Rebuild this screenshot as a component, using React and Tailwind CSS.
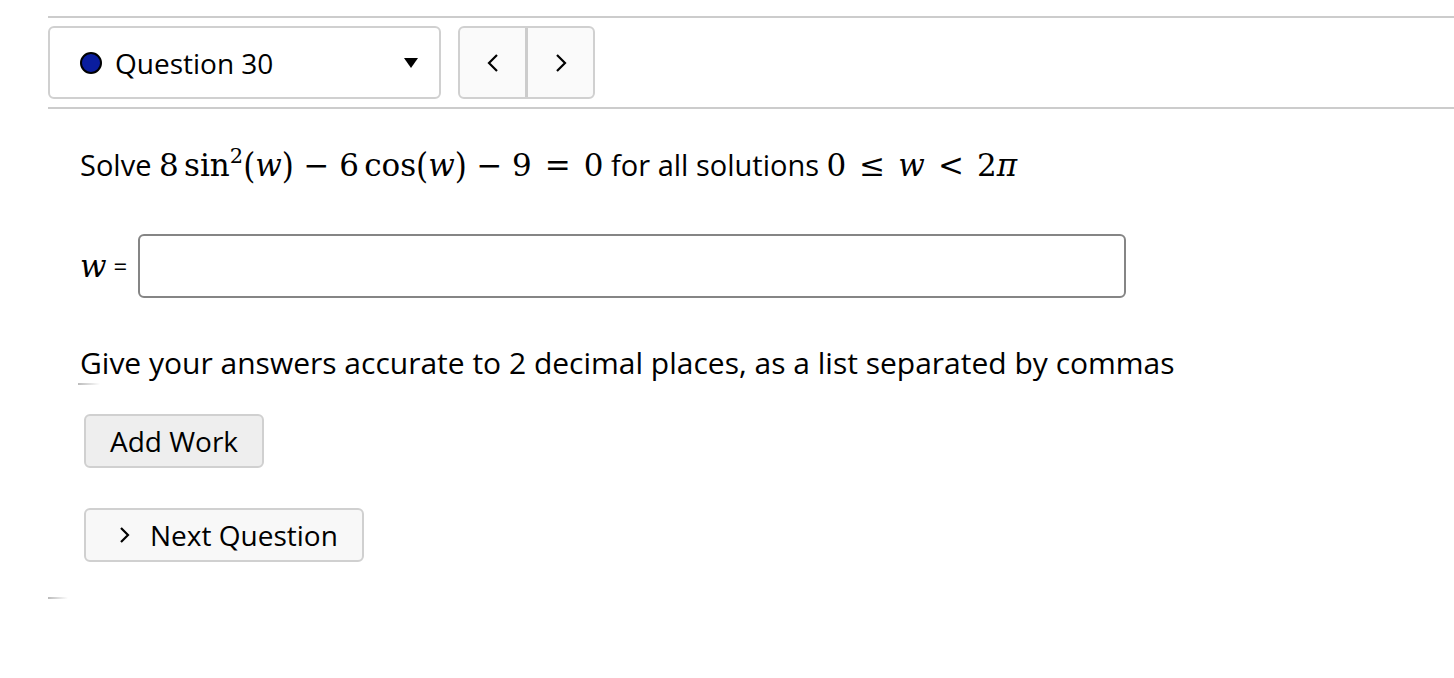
import { useState } from 'react';

const sans = { fontFamily: '"Open Sans", "Noto Sans", sans-serif' };

const M = ({ children, className = '' }) => (
  <span className={`font-['DejaVu_Serif',serif] text-[31px] ${className}`}>{children}</span>
);

const V = ({ children }) => <span className="italic">{children}</span>;
const Op = ({ children }) => <span className="mx-[0.31em]">{children}</span>;
const Rel = ({ children }) => <span className="mx-[0.42em]">{children}</span>;
const Paren = ({ children }) => <span className="inline-block scale-y-[1.15]">{children}</span>;

const Question = () => {
  const [answer, setAnswer] = useState('');

  return (
    <div className="bg-white min-h-[678px] text-black" style={sans}>
      <div className="pt-4 pl-12">
        <div className="h-[2px] bg-[#cccccc]" />

        <div className="flex items-center gap-[17px] py-[8px]">
          <div className="w-[393px] h-[73px] border-2 border-[#d0d0d0] rounded-[6px] flex items-center pl-[30px] pr-5">
            <span className="w-[22px] h-[22px] rounded-full bg-[#0a1d9e] border-[2.5px] border-black" />
            <span className="ml-[13px] text-[28px]">Question 30</span>
            <span className="ml-auto">
              <svg width="16" height="12" viewBox="0 0 16 12">
                <path d="M1 1 L15 1 L8 11 Z" fill="#000" />
              </svg>
            </span>
          </div>

          <div className="flex h-[73px] border-2 border-[#d0d0d0] rounded-[6px] bg-[#fafafa] overflow-hidden">
            <button className="w-[65px] flex items-center justify-center">
              <svg width="12" height="20" viewBox="0 0 12 20">
                <path d="M10 2 L2 10 L10 18" fill="none" stroke="#000" strokeWidth="2.2" />
              </svg>
            </button>
            <div className="w-[3px] bg-[#cccccc]" />
            <button className="w-[65px] flex items-center justify-center">
              <svg width="12" height="20" viewBox="0 0 12 20">
                <path d="M2 2 L10 10 L2 18" fill="none" stroke="#000" strokeWidth="2.2" />
              </svg>
            </button>
          </div>
        </div>

        <div className="h-[2px] bg-[#cccccc]" />

        <div className="pl-8 pt-[36px]">
          <p className="text-[29px] leading-[40px]">
            Solve{' '}
            <M>
              8<span className="ml-[0.17em]">sin</span>
              <sup className="text-[21px] -top-[13px]">2</sup>
              <Paren>(</Paren><V>w</V><Paren>)</Paren>
              <Op>−</Op>6<span className="ml-[0.17em]">cos</span>
              <Paren>(</Paren><V>w</V><Paren>)</Paren>
              <Op>−</Op>9<Rel>=</Rel>0
            </M>{' '}
            for all solutions{' '}
            <M>
              0<Rel>≤</Rel><V>w</V><Rel>&lt;</Rel>2<V>π</V>
            </M>
          </p>

          <div className="flex items-center mt-[49px]">
            <M className="italic text-[31px]">w</M>
            <span className="text-[24px] ml-[7px] mr-[11px]">=</span>
            <input
              value={answer}
              onChange={(e) => setAnswer(e.target.value)}
              className="w-[988px] h-[64px] border-2 border-[#858585] rounded-[6px] outline-none px-3 text-[24px]"
            />
          </div>

          <p className="mt-[45px] text-[30px] leading-[40px]">
            Give your answers accurate to 2 decimal places, as a list separated by commas
          </p>
          <div className="w-[22px] h-[2px] bg-gradient-to-r from-[#bbbbbb] to-white -ml-[2px]" />

          <button className="mt-[29px] ml-1 w-[180px] h-[54px] bg-[#eeeeee] border-2 border-[#d0d0d0] rounded-[6px] text-[28px] flex items-center justify-center">
            Add Work
          </button>

          <button className="mt-[40px] ml-1 w-[280px] h-[54px] bg-[#f8f8f8] border-2 border-[#d0d0d0] rounded-[6px] text-[28px] flex items-center pl-[33px]">
            <svg width="12" height="18" viewBox="0 0 12 18" className="mr-[19px]">
              <path d="M2 2 L9 9 L2 16" fill="none" stroke="#000" strokeWidth="2.2" />
            </svg>
            Next Question
          </button>
        </div>

        <div className="mt-[35px] w-[20px] h-[2px] bg-gradient-to-r from-[#bbbbbb] to-white" />
      </div>
    </div>
  );
};

export default function App() {
  return <Question />;
}
